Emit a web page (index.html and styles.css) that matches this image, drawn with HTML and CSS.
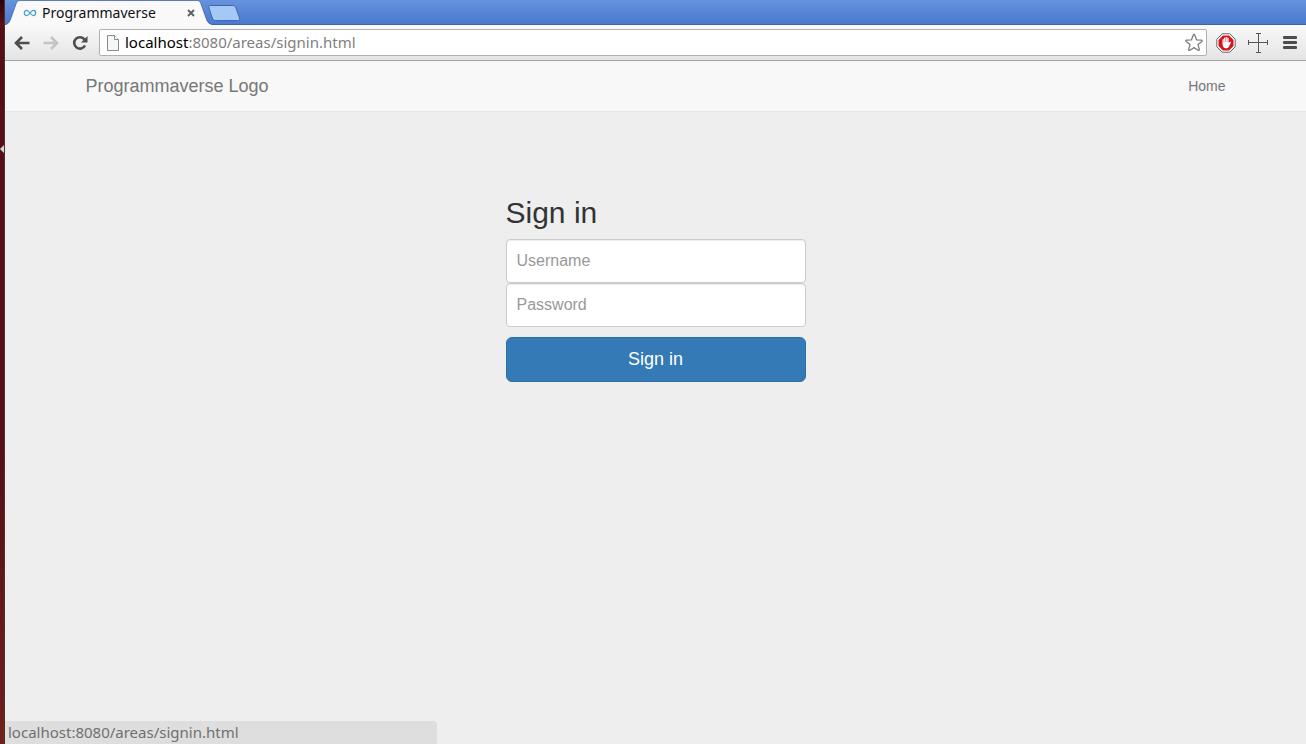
FILE: index.html
```html
<!DOCTYPE html>
<html lang="en">
<head>
    <meta charset="UTF-8">
    <meta name="viewport" content="width=device-width, initial-scale=1.0">
    <title>Programmaverse</title>
    <link rel="stylesheet" href="styles.css">
</head>
<body>
    <div class="launcher">
        <svg class="launcher-arrow" width="4" height="8" viewBox="0 0 4 8"><path d="M4 0v8L0 4z" fill="#d8d8d8"/></svg>
    </div>

    <div class="browser">
        <div class="tab-strip">
            <div class="tab">
                <svg class="tab-shape" width="208" height="25" viewBox="0 0 208 25">
                    <path d="M0 25C4 24 5 21 6 18L11 4C12 1 13 .5 16 .5H191C194 .5 195 1 196 4L201 18C202 21 203 24 208 25z" fill="#f9f9f9"/>
                    <path d="M0 24.500C4 24 5 21 6 18L11 4C12 1 13 .5 16 .5H191C194 .5 195 1 196 4L201 18C202 21 203 24 208 24.500" fill="none" stroke="#3a5b9c" stroke-opacity=".7"/>
                </svg>
                <svg class="favicon" width="14" height="8" viewBox="0 0 14 8" fill="none" stroke="#3f9bc4" stroke-width="1.200">
                    <path d="M7 4C5.500 2 4.700 1.300 3.600 1.300C2.300 1.300 1.300 2.500 1.300 4S2.300 6.700 3.600 6.700C4.700 6.700 5.500 6 7 4S9.300 1.300 10.400 1.300C11.700 1.300 12.700 2.500 12.700 4S11.700 6.700 10.400 6.700C9.300 6.700 8.500 6 7 4z"/>
                </svg>
                <span class="tab-title">Programmaverse</span>
                <button type="button" class="tab-close" aria-label="Close tab">
                    <svg width="8" height="8" viewBox="0 0 8 8"><path d="M1 1l6 6M7 1L1 7" stroke="#5c5c5c" stroke-width="1.800"/></svg>
                </button>
            </div>
            <button type="button" class="new-tab" aria-label="New tab">
                <svg width="33" height="16" viewBox="0 0 33 16"><path d="M3 .5H24C26 .5 27 1 28 3L31.500 13C32 15 31.500 15.500 30 15.500H8C6 15.500 5 15 4.300 13L1 3C.5 1 1 .5 3 .5z" fill="#a5c8f7" stroke="#4167ad"/></svg>
            </button>
        </div>

        <div class="toolbar">
            <button type="button" class="tool" aria-label="Back">
                <svg width="16" height="14" viewBox="0 0 16 14" fill="none" stroke="#4d4d4d" stroke-width="2.600"><path d="M15.500 7H2.500M8 1L2 7l6 6"/></svg>
            </button>
            <button type="button" class="tool" aria-label="Forward">
                <svg width="16" height="14" viewBox="0 0 16 14" fill="none" stroke="#c4c4c4" stroke-width="2.600"><path d="M.5 7h13M8 1l6 6l-6 6"/></svg>
            </button>
            <button type="button" class="tool" aria-label="Reload">
                <svg width="16" height="16" viewBox="0 0 16 16"><path d="M12.500 4.500A5.700 5.700 0 1 0 13 10.500" fill="none" stroke="#4d4d4d" stroke-width="2.600"/><path d="M15.500 1v6.500H9z" fill="#4d4d4d"/></svg>
            </button>
            <div class="address">
                <svg width="12" height="16" viewBox="0 0 12 16" fill="#f6f6f6" stroke="#8a8a8a"><path d="M.5 .5H7.500L11.500 4.500V15.500H.5z"/><path d="M7.500 .5V4.500H11.500" fill="#fff"/></svg>
                <span class="url"><b>localhost</b>:8080/areas/signin.html</span>
                <button type="button" class="star" aria-label="Bookmark">
                    <svg width="20" height="20" viewBox="0 0 20 20"><path d="M10 1.500Q10.600 1.500 10.900 2.400L12.600 6.900L17.300 7.100Q18.900 7.400 17.800 8.400L14 11.600L15.300 16.300Q15.500 17.900 14.100 17.200L10 14.600L5.900 17.200Q4.500 17.900 4.700 16.300L6 11.600L2.200 8.400Q1.100 7.400 2.700 7.100L7.400 6.900L9.100 2.400Q9.400 1.500 10 1.500z" fill="#fff" stroke="#7d7d7d" stroke-width="1.300" stroke-linejoin="round"/></svg>
                </button>
            </div>
            <button type="button" class="tool" aria-label="Ad blocker">
                <svg width="20" height="20" viewBox="0 0 20 20">
                    <path d="M6.200 .8h7.600l5.400 5.400v7.600l-5.400 5.400H6.200L.8 13.800V6.200z" fill="#fff" stroke="#666"/>
                    <path d="M6.900 2.500h6.200l4.400 4.400v6.200l-4.400 4.400H6.900l-4.400-4.400V6.900z" fill="#d4141b"/>
                    <path d="M6.500 11V6.500q.7-1 1.400 0V5q.8-1 1.600 0V4.400q.8-1 1.600 0V5q.8-.9 1.500 0V10l1.300-1.200q1.200-.3 1 .7L12.800 14q-.8 1.300-2 1.300H9.300q-2.500-.3-2.800-4.300z" fill="#fff"/>
                    <path d="M7.900 6.500v3M9.500 5v4M11.100 5v4" stroke="#d4141b" stroke-width=".4"/>
                </svg>
            </button>
            <button type="button" class="tool" aria-label="Measure">
                <svg width="20" height="20" viewBox="0 0 20 20" fill="none" stroke="#555"><path d="M10.500 1v18M1 9.500h18M8 .5h5M8 19.500h5M.5 7v5M19.500 7v5"/></svg>
            </button>
            <button type="button" class="tool" aria-label="Menu">
                <svg width="14" height="13" viewBox="0 0 14 13" fill="#4d4d4d"><rect width="14" height="3" rx="1"/><rect y="5" width="14" height="3" rx="1"/><rect y="10" width="14" height="3" rx="1"/></svg>
            </button>
        </div>

        <div class="page">
            <nav class="navbar">
                <div class="container">
                    <a class="brand" href="#">Programmaverse Logo</a>
                    <a class="nav-link" href="#">Home</a>
                </div>
            </nav>

            <form class="signin">
                <h2>Sign in</h2>
                <input type="text" class="field" placeholder="Username" aria-label="Username">
                <input type="password" class="field" placeholder="Password" aria-label="Password">
                <button type="submit" class="submit">Sign in</button>
            </form>
        </div>

        <div class="status">localhost:8080/areas/signin.html</div>
    </div>
</body>
</html>
```

FILE: styles.css
```css
* {
    box-sizing: border-box;
}

body {
    display: flex;
    min-height: 100vh;
    margin: 0;
    background: #eee;
    font-family: "Liberation Sans", Arial, sans-serif;
    font-size: 14px;
    color: #333;
}

button {
    padding: 0;
    border: none;
    background: none;
    cursor: pointer;
}

svg {
    display: block;
}

a {
    color: #777;
    text-decoration: none;
}

/* desktop edge left of the window */
.launcher {
    position: relative;
    flex: none;
    width: 5px;
    background: linear-gradient(#2a0508, #560f15 24px, #560f15 60%, #70201c);
    border-right: 1px solid #4a3030;
}

.launcher-arrow {
    position: absolute;
    top: 145px;
    left: 0;
}

.browser {
    position: relative;
    flex: 1;
    min-width: 0;
}

.tab-strip {
    display: flex;
    height: 25px;
    background: linear-gradient(#6593dd, #4a79cf);
    border-bottom: 1px solid #41639f;
    font-family: "Noto Sans", sans-serif;
}

.tab {
    position: relative;
    display: flex;
    align-items: center;
    width: 203px;
    height: 25px;
    padding: 0 13px 0 18px;
}

.tab-shape {
    position: absolute;
    top: 0;
    left: 0;
}

.favicon,
.tab-title,
.tab-close {
    position: relative;
}

.tab-title {
    flex: 1;
    margin-left: 5px;
    font-size: 14px;
    color: #111;
}

.new-tab {
    align-self: flex-end;
    margin-bottom: 3px;
}

.toolbar {
    display: flex;
    align-items: center;
    height: 36px;
    padding: 0 6px 0 7px;
    background: linear-gradient(#f9f9f9, #e4e4e4);
    border-bottom: 1px solid #a5a5a5;
}

.tool {
    display: flex;
    flex: none;
    align-items: center;
    justify-content: center;
    width: 20px;
    height: 24px;
    margin-right: 9px;
}

.address {
    display: flex;
    flex: 1;
    align-items: center;
    height: 27px;
    margin-right: 9px;
    padding: 0 2px 0 7px;
    background: #fff;
    border: 1px solid #b0b0b0;
    border-radius: 2px;
}

.url {
    flex: 1;
    margin-left: 6px;
    padding-bottom: 2px;
    font-family: "Noto Sans", sans-serif;
    font-size: 15px;
    color: #808080;
}

.url b {
    font-weight: normal;
    color: #000;
}

.address ~ .tool {
    margin-right: 12px;
}

.address ~ .tool:last-child {
    margin-right: 0;
}

.navbar {
    background: #f8f8f8;
    border-bottom: 1px solid #e7e7e7;
}

.container {
    display: flex;
    align-items: center;
    justify-content: space-between;
    max-width: 1170px;
    height: 50px;
    margin: 0 auto;
    padding: 0 15px;
}

.brand {
    font-size: 18px;
}

.signin {
    max-width: 300px;
    margin: 84px auto 0;
}

.signin h2 {
    margin: 0 0 10px;
    font-size: 30px;
    font-weight: normal;
    line-height: 33px;
}

.field {
    display: block;
    width: 100%;
    height: 44px;
    padding: 10px;
    border: 1px solid #ccc;
    border-radius: 4px;
    background: #fff;
    box-shadow: inset 0 1px 1px rgba(0, 0, 0, 0.075);
    font-family: inherit;
    font-size: 16px;
}

.field::placeholder {
    color: #999;
}

.submit {
    width: 100%;
    height: 45px;
    margin-top: 10px;
    border: 1px solid #2e6da4;
    border-radius: 6px;
    background: #337ab7;
    color: #fff;
    font-family: inherit;
    font-size: 18px;
}

/* link target shown over the page */
.status {
    position: absolute;
    bottom: 0;
    left: 0;
    width: 432px;
    height: 23px;
    padding-left: 3px;
    background: #dedede;
    border-top-right-radius: 4px;
    font-family: "Noto Sans", sans-serif;
    font-size: 15px;
    line-height: 23px;
    color: #707070;
}
```
